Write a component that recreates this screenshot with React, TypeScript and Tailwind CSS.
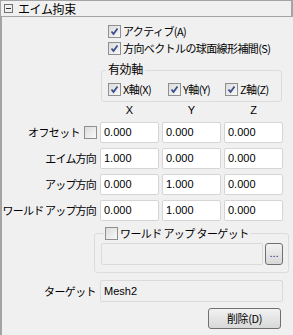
import React from "react";

const jp = { fontFamily: '"Noto Sans CJK JP", "Noto Sans", sans-serif' };
const num = { fontFamily: '"Liberation Sans", Arial, sans-serif' };

const Check = ({ checked = false }: { checked?: boolean }) => (
  <span className="w-[13px] h-[13px] shrink-0 border border-[#8f8f8f] bg-gradient-to-br from-[#dcdcdc] to-[#f8f8f8] flex items-center justify-center">
    {checked && (
      <svg width="9" height="9" viewBox="0 0 9 9">
        <path d="M1.5 4.5 L3.5 7 L7.5 1.5" fill="none" stroke="#3a4f8c" strokeWidth="1.8" />
      </svg>
    )}
  </span>
);

const CheckItem = ({ label, checked }: { label: React.ReactNode; checked?: boolean }) => (
  <div className="flex items-center gap-[2px] h-[13px]">
    <Check checked={checked} />
    <span className="text-[11px] tracking-[-0.6px] text-black leading-none whitespace-nowrap">{label}</span>
  </div>
);

const Field = ({ value }: { value: string }) => (
  <div
    className="h-[21px] bg-white border border-[#d5d5d5] rounded-[2px] flex items-center px-[3px] text-[11px] text-black leading-none"
    style={num}
  >
    {value}
  </div>
);

const rows = [
  { label: "エイム方向", v: ["1.000", "0.000", "0.000"] },
  { label: "アップ方向", v: ["0.000", "1.000", "0.000"] },
  { label: "ワールド アップ方向", v: ["0.000", "1.000", "0.000"] },
];

export default function App() {
  return (
    <div className="w-[293px] h-[335px] bg-[#f0f0f0] overflow-hidden" style={jp}>
      {/* header */}
      <div className="h-[17px] border border-[#a4a4a4] border-r-2 flex items-center gap-[5px] pl-[3px]">
        <span className="w-[9px] h-[9px] border border-[#707070] flex items-center justify-center">
          <span className="w-[5px] h-px bg-[#303030]" />
        </span>
        <span className="text-[12px] tracking-[-0.4px] leading-none text-black">エイム拘束</span>
      </div>

      {/* body */}
      <div className="h-[318px] border-l-2 border-[#a4a4a4] pt-[8px]">
        <div className="pl-[106px] flex flex-col gap-[4px]">
          <CheckItem checked label="アクティブ(A)" />
          <CheckItem checked label="方向ベクトルの球面線形補間(S)" />
        </div>

        {/* 有効軸 */}
        <div className="relative ml-[99px] mt-[15px] w-[181px] h-[32px] border border-[#dcdcdc] rounded-[3px]">
          <span className="absolute -top-[8px] left-[4px] px-[2px] bg-[#f0f0f0] text-[12px] tracking-[-0.4px] leading-none">
            有効軸
          </span>
          <div className="flex items-center pt-[12px] pl-[6px]">
            <div className="w-[60px]"><CheckItem checked label="X軸(X)" /></div>
            <div className="w-[57px]"><CheckItem checked label="Y軸(Y)" /></div>
            <CheckItem checked label="Z軸(Z)" />
          </div>
        </div>

        {/* grid */}
        <div className="grid grid-cols-[95px_59px_59px_59px] gap-x-[3px] gap-y-[5px] mt-[1px] items-center">
          <span />
          <span className="text-center text-[11px] leading-none h-[14px] pt-[2px]" style={num}>X</span>
          <span className="text-center text-[11px] leading-none h-[14px] pt-[2px]" style={num}>Y</span>
          <span className="text-center text-[11px] leading-none h-[14px] pt-[2px]" style={num}>Z</span>

          <div className="flex items-center justify-end gap-[4px]">
            <span className="text-[11px] tracking-[-0.6px] leading-none whitespace-nowrap">オフセット</span>
            <Check />
          </div>
          <Field value="0.000" />
          <Field value="0.000" />
          <Field value="0.000" />

          {rows.map((r) => (
            <div key={r.label} className="contents">
              <div className="flex justify-end pr-[1px]">
                <span className="text-[11px] tracking-[-0.8px] leading-none whitespace-nowrap">{r.label}</span>
              </div>
              <Field value={r.v[0]} />
              <Field value={r.v[1]} />
              <Field value={r.v[2]} />
            </div>
          ))}
        </div>

        {/* ワールド アップ ターゲット */}
        <div className="relative ml-[92px] mt-[12px] w-[195px] h-[40px] border border-[#dcdcdc] rounded-[3px]">
          <div className="absolute -top-[7px] left-[9px] px-[1px] bg-[#f0f0f0]">
            <CheckItem label="ワールド アップ ターゲット" />
          </div>
          <div className="flex items-center gap-[2px] pl-[6px] pt-[9px]">
            <div className="w-[162px] h-[22px] bg-[#f0f0f0] border border-[#dadada] rounded-[2px]" />
            <div className="w-[18px] h-[22px] border border-[#707070] rounded-[3px] bg-gradient-to-b from-[#f2f2f2] to-[#d8d8d8] flex items-end justify-center pb-[5px] text-[11px] leading-none text-[#1a237e]" style={num}>
              ...
            </div>
          </div>
        </div>

        {/* target */}
        <div className="flex items-center mt-[7px]">
          <div className="w-[95px] flex justify-end pr-[1px]">
            <span className="text-[11px] tracking-[-0.6px] leading-none">ターゲット</span>
          </div>
          <div
            className="ml-[3px] w-[183px] h-[22px] bg-[#f0f0f0] border border-[#dadada] rounded-[2px] flex items-center px-[3px] text-[11px] leading-none"
            style={num}
          >
            Mesh2
          </div>
        </div>

        <div className="flex justify-end pr-[12px] mt-[6px]">
          <div className="w-[73px] h-[21px] border border-[#707070] rounded-[3px] bg-gradient-to-b from-[#f2f2f2] to-[#d8d8d8] flex items-center justify-center text-[11px] tracking-[-0.4px] leading-none">
            削除(D)
          </div>
        </div>
      </div>
    </div>
  );
}
